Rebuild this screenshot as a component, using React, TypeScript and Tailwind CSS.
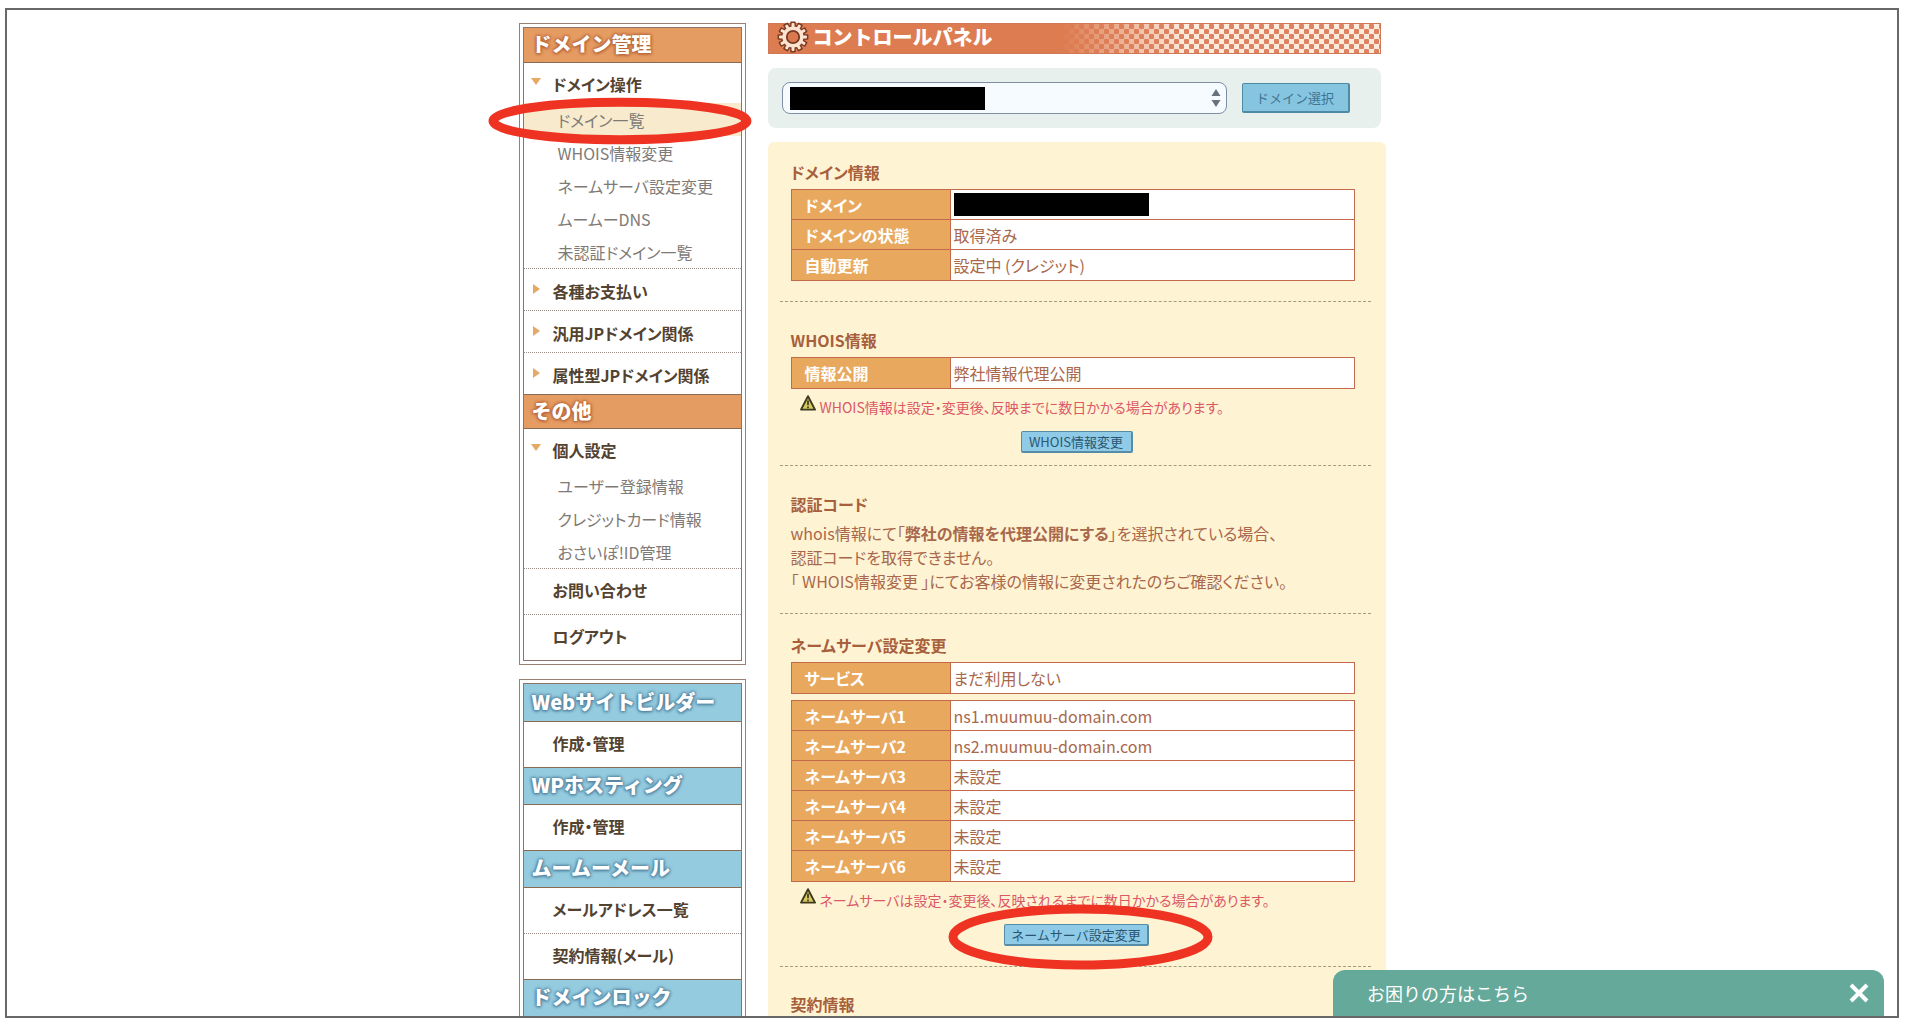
import React from 'react';
import clsx from 'clsx';

interface MenuEntry {
  label: string;
  open?: boolean;
  closed?: boolean;
  children?: string[];
}

interface MenuGroup {
  title: string;
  entries: MenuEntry[];
}

const domainMenu: MenuGroup[] = [
  {
    title: 'ドメイン管理',
    entries: [
      {
        label: 'ドメイン操作',
        open: true,
        children: ['ドメイン一覧', 'WHOIS情報変更', 'ネームサーバ設定変更', 'ムームーDNS', '未認証ドメイン一覧'],
      },
      { label: '各種お支払い', closed: true },
      { label: '汎用JPドメイン関係', closed: true },
      { label: '属性型JPドメイン関係', closed: true },
    ],
  },
  {
    title: 'その他',
    entries: [
      { label: '個人設定', open: true, children: ['ユーザー登録情報', 'クレジットカード情報', 'おさいぽ!ID管理'] },
      { label: 'お問い合わせ' },
      { label: 'ログアウト' },
    ],
  },
];

const serviceMenu: MenuGroup[] = [
  { title: 'Webサイトビルダー', entries: [{ label: '作成・管理' }] },
  { title: 'WPホスティング', entries: [{ label: '作成・管理' }] },
  { title: 'ムームーメール', entries: [{ label: 'メールアドレス一覧' }, { label: '契約情報(メール)' }] },
  { title: 'ドメインロック', entries: [] },
];

const nameServers = [
  ['ネームサーバ1', 'ns1.muumuu-domain.com'],
  ['ネームサーバ2', 'ns2.muumuu-domain.com'],
  ['ネームサーバ3', '未設定'],
  ['ネームサーバ4', '未設定'],
  ['ネームサーバ5', '未設定'],
  ['ネームサーバ6', '未設定'],
];

const Marker: React.FC<{ className: string }> = ({ className }) => (
  <svg className={clsx('pointer-events-none absolute z-10 overflow-visible', className)} viewBox="0 0 262 66" preserveAspectRatio="none" aria-hidden="true">
    <ellipse cx="131" cy="33" rx="127" ry="28" fill="none" stroke="#ee3322" strokeWidth="9" vectorEffect="non-scaling-stroke" />
  </svg>
);

const Arrow: React.FC<{ down?: boolean }> = ({ down }) => (
  <svg className="mt-1 size-3 shrink-0" viewBox="0 0 12 12" aria-hidden="true">
    <path d={down ? 'M1 2h10L6 9z' : 'M3 1v10l7-5z'} fill="#e5a964" />
  </svg>
);

const WarningIcon = () => (
  <svg className="size-4 shrink-0" viewBox="0 0 16 16" aria-hidden="true">
    <path d="M8 1.2 15 14.6H1z" fill="#d8c95e" stroke="#3d3a20" strokeWidth="1.9" strokeLinejoin="round" />
    <path d="M8 5.5v4.8M8 11.6v1.6" stroke="#3d3a20" strokeWidth="1.7" />
  </svg>
);

// 歯車アイコン
const GearIcon = () => (
  <svg className="relative size-8 shrink-0" viewBox="0 0 32 32" aria-hidden="true">
    {[14, 11].map((r, layer) => (
      <g key={r} fill={layer === 0 ? '#7a3a22' : '#fbe3d0'}>
        {Array.from({ length: 12 }, (_, i) => (
          <rect
            key={i}
            x={layer === 0 ? 13.2 : 14.5}
            y={layer === 0 ? 0.6 : 2}
            width={layer === 0 ? 5.6 : 3}
            height="7"
            rx="1"
            transform={`rotate(${i * 30} 16 16)`}
          />
        ))}
        <circle cx="16" cy="16" r={layer === 0 ? 12 : 10.6} />
      </g>
    ))}
    <circle cx="16" cy="16" r="6.2" fill="#d9794f" stroke="#7a3a22" strokeWidth="1.8" />
  </svg>
);

const SideMenu: React.FC<{ groups: MenuGroup[]; tone: 'orange' | 'blue' }> = ({ groups, tone }) => (
  <nav className="border border-[#9b7f72] p-[3px]">
    <div className="border border-[#8c7468]">
      {groups.map((group, g) => (
        <section key={group.title}>
          <h2
            className={clsx(
              'flex items-center border-b border-[#8c6a50] pb-0.5 pl-2 text-xl font-black text-white [font-feature-settings:normal]',
              g > 0 && 'border-t',
              tone === 'orange'
                ? 'h-[35px] bg-[#e59c62] [text-shadow:0_0_2px_#b8663a,0_0_3px_#b8663a,0_0_4px_#b8663a,0_1px_3px_#b8663a]'
                : 'h-[38px] bg-[#95cbdf] [text-shadow:0_0_2px_#5585a2,0_0_3px_#5585a2,0_0_4px_#5585a2,0_1px_3px_#5585a2]',
            )}
          >
            {group.title}
          </h2>
          <ul>
            {group.entries.map((entry, i) => {
              const last = i === group.entries.length - 1;
              const arrow = entry.open || entry.closed;
              return (
                <li key={entry.label} className={clsx(!last && 'border-b border-dotted border-[#9a8c84]')}>
                  <a
                    href="#"
                    className={clsx(
                      'flex font-bold text-[#53422f]',
                      entry.open && 'h-10 pt-[9px]',
                      entry.closed && 'h-[41px] pt-[10px]',
                      !arrow && 'h-[45px] items-center pb-1',
                    )}
                  >
                    <span className="flex w-[29px] shrink-0 pl-[6px]">{arrow && <Arrow down={entry.open} />}</span>
                    {entry.label}
                  </a>
                  {entry.children && (
                    <ul>
                      {entry.children.map((child) => {
                        const current = child === 'ドメイン一覧';
                        return (
                          <li key={child} className={clsx('relative', current && 'bg-[#f8ebcd]')}>
                            <a href="#" className="flex h-[33px] items-center pl-[34px] text-[#807a76]">
                              {child}
                            </a>
                            {current && <Marker className="-top-1 -left-[35px] h-[44px] w-[262px]" />}
                          </li>
                        );
                      })}
                    </ul>
                  )}
                </li>
              );
            })}
          </ul>
        </section>
      ))}
    </div>
  </nav>
);

const Redacted = () => <span className="block h-[23px] w-[195px] bg-black" />;

const InfoTable: React.FC<{ rows: React.ReactNode[][]; label: string }> = ({ rows, label }) => (
  <table className="w-full border-collapse bg-white" aria-label={label}>
    <tbody>
      {rows.map(([name, value]) => (
        <tr key={String(name)} className="h-[30px] last:h-[31px]">
          <th scope="row" className="w-[159px] border border-[#c4694c] bg-[#e8a95f] p-0 pl-[13px] text-left font-bold text-white">
            {name}
          </th>
          <td className="border border-[#c4694c] p-0 pl-[3px]">{value}</td>
        </tr>
      ))}
    </tbody>
  </table>
);

const Warning: React.FC<{ children: React.ReactNode }> = ({ children }) => (
  <p className="mt-[6px] flex gap-1 pl-[9px] text-sm leading-6 text-[#dc5866]">
    <WarningIcon />
    {children}
  </p>
);

const SmallButton: React.FC<{ children: React.ReactNode; className: string }> = ({ children, className }) => (
  <button
    type="button"
    className={clsx(
      'flex h-[22px] items-center justify-center rounded-xs border border-r-2 border-b-2 border-[#568ca6] bg-[#8fcbe6] text-[13px] text-[#2b5672] [font-feature-settings:normal]',
      className,
    )}
  >
    {children}
  </button>
);

const Heading: React.FC<{ children: React.ReactNode }> = ({ children }) => (
  <h3 className="mb-[5px] font-bold text-[#a85f3c]">{children}</h3>
);

const App = () => (
  <div className="h-screen bg-white pt-2 pr-[11px] pb-[10px] pl-[5px] font-['Noto_Sans_CJK_JP',sans-serif] text-base leading-6 [font-feature-settings:'palt']">
    <div className="relative h-full overflow-hidden border-2 border-[#68686a] pt-[13px]">
      <div className="mx-auto flex w-[867px] items-start gap-[22px]">
        <aside className="flex w-[227px] shrink-0 flex-col gap-[14px]">
          <SideMenu groups={domainMenu} tone="orange" />
          <SideMenu groups={serviceMenu} tone="blue" />
        </aside>

        <main className="min-w-0 flex-1">
          <header className="relative mr-[5px] flex h-[31px] items-center gap-1 border border-[#cf7858] bg-[#fdebdc] pb-1 pl-2">
            <svg className="absolute inset-0 size-full" aria-hidden="true">
              <defs>
                <pattern id="checks" width="10" height="10" patternUnits="userSpaceOnUse">
                  <rect width="5" height="5" rx="1" fill="#dd8363" />
                  <rect x="5" y="5" width="5" height="5" rx="1" fill="#dd8363" />
                </pattern>
                <linearGradient id="fade">
                  <stop offset="0.48" stopColor="#dd7c51" />
                  <stop offset="0.68" stopColor="#dd7c51" stopOpacity="0" />
                </linearGradient>
              </defs>
              <rect width="100%" height="100%" fill="url(#checks)" />
              <rect width="100%" height="100%" fill="url(#fade)" />
            </svg>
            <GearIcon />
            <h1 className="relative text-xl font-black text-white [font-feature-settings:normal]">コントロールパネル</h1>
          </header>

          <form className="mt-[14px] mr-[5px] flex h-[60px] items-center gap-[15px] rounded-lg bg-[#e7f0ec] pl-[14px]">
            <div className="relative w-[445px]">
              <select aria-label="ドメイン" className="h-[32px] w-full appearance-none rounded-lg border border-[#7d8ea6] bg-[#f5fbff]">
                <option></option>
              </select>
              <span className="pointer-events-none absolute inset-y-0 left-2 flex items-center">
                <Redacted />
              </span>
              <svg className="pointer-events-none absolute top-[6px] right-[6px] h-5 w-[10px]" viewBox="0 0 10 20" aria-hidden="true">
                <path d="M5 1l4.5 7h-9zM5 19l4.5-7h-9z" fill="#68727c" />
              </svg>
            </div>
            <button
              type="button"
              className="h-[30px] w-[108px] rounded-xs border border-r-2 border-b-2 border-[#4f89a6] bg-[#86c5e0] text-[13px] text-[#3f7491] [font-feature-settings:normal]"
            >
              ドメイン選択
            </button>
          </form>

          <div className="mt-[14px] rounded-t-md bg-[#fef4d4] pr-[15px] pb-10 pl-3 text-[#a9674b]">
            <section className="border-b border-dashed border-[#a99a7c] pt-[18px] pr-4 pb-5 pl-[11px]">
              <Heading>ドメイン情報</Heading>
              <InfoTable
                label="ドメイン情報"
                rows={[
                  ['ドメイン', <Redacted key="domain" />],
                  ['ドメインの状態', '取得済み'],
                  ['自動更新', '設定中 (クレジット)'],
                ]}
              />
            </section>

            <section className="border-b border-dashed border-[#a99a7c] pt-[26px] pr-4 pb-3 pl-[11px]">
              <Heading>WHOIS情報</Heading>
              <InfoTable label="WHOIS情報" rows={[['情報公開', '弊社情報代理公開']]} />
              <Warning>WHOIS情報は設定・変更後、反映までに数日かかる場合があります。</Warning>
              <div className="mt-3 flex justify-center pl-2">
                <SmallButton className="w-[112px]">WHOIS情報変更</SmallButton>
              </div>
            </section>

            <section className="border-b border-dashed border-[#a99a7c] pt-[26px] pr-4 pb-5 pl-[11px]">
              <Heading>認証コード</Heading>
              <p>
                whois情報にて「<strong>弊社の情報を代理公開にする</strong>」を選択されている場合、
                <br />
                認証コードを取得できません。
                <br />「 <a href="#">WHOIS情報変更</a> 」にてお客様の情報に変更されたのちご確認ください。
              </p>
            </section>

            <section className="border-b border-dashed border-[#a99a7c] pt-[19px] pr-4 pb-5 pl-[11px]">
              <Heading>ネームサーバ設定変更</Heading>
              <InfoTable label="サービス" rows={[['サービス', 'まだ利用しない']]} />
              <div className="mt-[6px]">
                <InfoTable label="ネームサーバ" rows={nameServers} />
              </div>
              <Warning>ネームサーバは設定・変更後、反映されるまでに数日かかる場合があります。</Warning>
              <div className="mt-3 flex justify-center pl-2">
                <div className="relative">
                  <SmallButton className="w-[145px]">ネームサーバ設定変更</SmallButton>
                  <Marker className="-top-5 -left-[55px] h-[66px] w-[263px]" />
                </div>
              </div>
            </section>

            <section className="pt-[25px] pr-4 pl-[11px]">
              <Heading>契約情報</Heading>
            </section>
          </div>
        </main>
      </div>

      <div className="absolute right-[13px] bottom-0 z-20 flex h-[46px] w-[551px] items-center justify-between rounded-t-xl bg-[#65a99a] pr-[14px] pl-[34px] text-lg text-white [font-feature-settings:normal]">
        お困りの方はこちら
        <button type="button" aria-label="閉じる">
          <svg className="size-[22px]" viewBox="0 0 22 22" aria-hidden="true">
            <path d="M3 3l16 16M19 3 3 19" stroke="#fff" strokeWidth="4" />
          </svg>
        </button>
      </div>
    </div>
  </div>
);

export default App;
